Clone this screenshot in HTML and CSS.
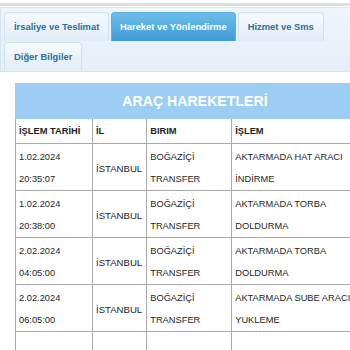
FILE: index.html
```html
<!DOCTYPE html>
<html lang="tr">
<head>
    <meta charset="UTF-8">
    <meta name="viewport" content="width=device-width, initial-scale=1.0">
    <title>Gönderi Detayı</title>
    <link rel="stylesheet" href="styles.css">
</head>
<body>
    <div class="topline"></div>
    <div class="tabs">
        <a class="tab">İrsaliye ve Teslimat</a>
        <a class="tab active">Hareket ve Yönlendirme</a>
        <a class="tab">Hizmet ve Sms</a>
        <a class="tab">Diğer Bilgiler</a>
    </div>
    <div class="content">
        <table class="moves">
            <tr>
                <th colspan="4" class="title">ARAÇ HAREKETLERİ</th>
            </tr>
            <tr class="head">
                <th class="c1">İŞLEM TARİHİ</th>
                <th class="c2">İL</th>
                <th class="c3">BIRIM</th>
                <th class="c4">İŞLEM</th>
            </tr>
            <tr>
                <td>1.02.2024<br>20:35:07</td>
                <td class="city">İSTANBUL</td>
                <td>BOĞAZİÇİ<br>TRANSFER</td>
                <td>AKTARMADA HAT ARACI<br>İNDİRME</td>
            </tr>
            <tr>
                <td>1.02.2024<br>20:38:00</td>
                <td class="city">İSTANBUL</td>
                <td>BOĞAZİÇİ<br>TRANSFER</td>
                <td>AKTARMADA TORBA<br>DOLDURMA</td>
            </tr>
            <tr>
                <td>2.02.2024<br>04:05:00</td>
                <td class="city">İSTANBUL</td>
                <td>BOĞAZİÇİ<br>TRANSFER</td>
                <td>AKTARMADA TORBA<br>DOLDURMA</td>
            </tr>
            <tr>
                <td>2.02.2024<br>06:05:00</td>
                <td class="city">İSTANBUL</td>
                <td>BOĞAZİÇİ<br>TRANSFER</td>
                <td>AKTARMADA SUBE ARACI<br>YUKLEME</td>
            </tr>
            <tr>
                <td>&nbsp;<br>&nbsp;</td>
                <td class="city"></td>
                <td></td>
                <td></td>
            </tr>
        </table>
    </div>
</body>
</html>
```

FILE: styles.css
```css
body {
    margin: 0;
    font-family: "Liberation Sans", Arial, sans-serif;
    background: #fff;
    overflow: hidden;
}
.topline {
    height: 3px;
    margin-top: 3px;
    background: #dedede;
}
.tabs {
    margin-top: 1px;
    height: 56px;
    padding: 4px 0 3px 3px;
    display: flex;
    flex-wrap: wrap;
    align-content: flex-start;
    column-gap: 2px;
    row-gap: 1px;
    background: linear-gradient(#eef5fb, #e4eff9);
    border-top: 1px solid #dbe8f3;
    border-bottom: 1px solid #d3e3f1;
    border-left: 1px solid #d3e3f1;
}
.tab {
    height: 28px;
    line-height: 28px;
    padding: 0 9px;
    font-size: 9.4px;
    font-weight: bold;
    color: #2f6d9c;
    background: linear-gradient(#f6fafd, #e0edf8);
    border: 1px solid #cfe0ee;
    border-bottom: none;
    border-radius: 4px 4px 0 0;
    white-space: nowrap;
}
.tab:nth-child(1) {
    width: 85px;
}
.tab:nth-child(2) {
    padding: 0 8px;
}
.tab:nth-child(3) {
    width: 66px;
}
.tab:nth-child(4) {
    width: 58px;
    height: 27px;
}
.tab.active {
    color: #fff;
    background: linear-gradient(#6dbdea, #3d9bd6);
    border-color: #5aaee0;
}
.content {
    padding: 11px 0 0 15px;
}
.moves {
    width: 360px;
    border-collapse: collapse;
    font-size: 9.3px;
    color: #1e1e1e;
}
.moves th,
.moves td {
    border: 1px solid #a9a9a9;
    text-align: left;
    padding: 2px 4px 0 3px;
    vertical-align: top;
}
.moves td {
    line-height: 22px;
    padding-top: 2px;
}
.moves .title {
    height: 34px;
    padding: 0;
    background: #9ccdf2;
    border-color: #9ccdf2;
    color: #fff;
    font-size: 14px;
    text-align: center;
    vertical-align: middle;
    letter-spacing: 0.1px;
}
.moves .head th {
    height: 24px;
    vertical-align: middle;
    font-weight: bold;
    padding-top: 0;
}
.moves td.city {
    vertical-align: middle;
    font-size: 9.6px;
    padding-top: 4px;
}
.c1 { width: 69px; }
.c2 { width: 44px; }
.c3 { width: 77px; }
```
